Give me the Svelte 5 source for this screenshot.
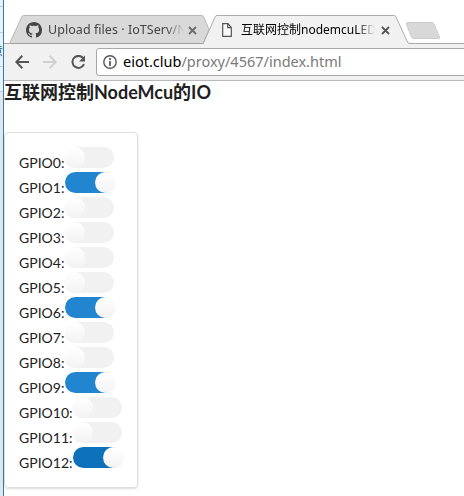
<script>
  const pins = Array.from({ length: 13 }, (_, id) => ({
    id,
    on: [1, 6, 9, 12].includes(id),
    focused: id === 12
  }));
</script>

<div class="screen">
  <div class="desktop">
    <i class="edge" style="top:6px"></i>
    <i class="edge" style="top:32px"></i>
    <span>意</span>
    <i class="edge" style="top:66px"></i>
    <i class="edge" style="top:91px"></i>
  </div>
  <div class="window">
    <header class="tabs">
      <svg class="shapes" width="460" height="44" viewBox="4 0 460 44">
        <path d="M4 43.5H464" stroke="#a9a9a9" />
        <path d="M9.5 43.5L22 16.5Q22.500 15.500 23.500 15.500H201Q203 15.500 203.500 16.500L209 29.500L203 43.500Z" fill="#d9d9d9" stroke="#b7b7b7" />
        <path d="M9.500 43.500H204" stroke="#a0a0a0" />
        <path d="M203.500 44L215 17Q215.500 15.500 217 15.500H394Q395.500 15.500 396 17L407.500 42Q408 43.500 410 43.500V45H203Z" fill="#f1f1f1" />
        <path d="M202 43.500Q203.500 43.500 204 42L215 17Q215.500 15.500 217 15.500H394Q395.500 15.500 396 17L407.500 42Q408 43.500 410 43.500" fill="none" stroke="#adadad" />
        <path d="M408 22.500H431.500Q433.500 22.500 434 24L439.500 37Q440 38.500 438 38.500H414Q412 38.500 411.500 37L406.500 24.500Q406 22.500 408 22.500Z" fill="#d8d8d8" stroke="#cbcbcb" />
      </svg>
      <div class="tab first">
        <svg width="16" height="16" viewBox="0 0 16 16"><path fill="#444" d="M8 0C3.580 0 0 3.580 0 8c0 3.540 2.290 6.530 5.470 7.590.4.070.550-.17.550-.38 0-.19-.01-.82-.01-1.490-2.010.37-2.530-.49-2.690-.94-.09-.23-.48-.94-.82-1.130-.28-.15-.68-.52-.01-.53.630-.01 1.080.58 1.230.82.720 1.210 1.870.87 2.330.66.070-.52.280-.87.510-1.070-1.780-.2-3.640-.89-3.640-3.950 0-.87.310-1.590.82-2.150-.08-.2-.36-1.020.08-2.120 0 0 .67-.21 2.200.82.640-.18 1.320-.27 2-.27s1.360.09 2 .27c1.530-1.040 2.200-.82 2.200-.82.440 1.100.16 1.920.08 2.120.51.560.82 1.270.82 2.150 0 3.070-1.870 3.750-3.650 3.950.29.250.54.730.54 1.480 0 1.070-.01 1.930-.01 2.200 0 .21.150.46.550.38A8.010 8.010 0 0 0 16 8c0-4.420-3.580-8-8-8z" /></svg>
        <span class="title">Upload files · IoTServ/N</span>
        <svg class="close" width="9" height="9" viewBox="0 0 9 9"><path d="M1 1l7 7M8 1L1 8" stroke="#6b6b6b" stroke-width="1.800" /></svg>
      </div>
      <div class="tab second">
        <svg width="10" height="14" viewBox="0 0 10 14"><path d="M.700.700H6L9.300 4.500V13.300H.700ZM5.700.700V4.700H9.300" fill="#fafafa" stroke="#555" stroke-width="1.200" /></svg>
        <span class="title">互联网控制nodemcuLED</span>
        <svg class="close" width="9" height="9" viewBox="0 0 9 9"><path d="M1 1l7 7M8 1L1 8" stroke="#555" stroke-width="1.800" /></svg>
      </div>
    </header>
    <nav class="toolbar">
      <svg class="arrow" width="14" height="14" viewBox="0 0 14 14"><path d="M14 7H1.500M7.300.800L1.300 7l6 6.200" fill="none" stroke="#555" stroke-width="2" /></svg>
      <svg class="arrow" width="14" height="14" viewBox="0 0 14 14"><path d="M0 7h12.500M6.700.800l6 6.200-6 6.200" fill="none" stroke="#d0d0d0" stroke-width="2" /></svg>
      <svg class="reload" width="15" height="15" viewBox="0 0 15 15"><path d="M12.200 3.200A6 6 0 1 0 13 9.200" fill="none" stroke="#555" stroke-width="2" /><path d="M14 .500V6.500H8Z" fill="#555" /></svg>
      <div class="url">
        <svg width="14" height="14" viewBox="0 0 14 14"><circle cx="7" cy="7" r="6.200" fill="none" stroke="#555" stroke-width="1.400" /><path d="M7 3v2M7 6v5" stroke="#555" stroke-width="1.700" /></svg>
        <span class="address">eiot.club<em>/proxy/4567/index.html</em></span>
      </div>
    </nav>
    <main>
      <h3>互联网控制NodeMcu的IO</h3>
      <section>
        {#each pins as pin (pin.id)}
          <div class="row">
            <span class="label">GPIO{pin.id}:</span>
            <span class="toggle" class:on={pin.on} class:focused={pin.focused}><i></i></span>
          </div>
        {/each}
      </section>
    </main>
  </div>
</div>

<style>
  .screen { display: flex; width: 464px; height: 496px; overflow: hidden; background: #fff; }
  .desktop { position: relative; width: 3px; flex: none; overflow: hidden; background: linear-gradient(#eaf1f9 0 91px, #e4e5e7 91px); color: #35506e; font: 12px "Noto Sans CJK SC", sans-serif; }
  .desktop span { position: absolute; right: 0; top: 42px; }
  .edge { position: absolute; left: 0; width: 3px; height: 1px; background: #bccbd9; }
  .window { box-sizing: border-box; width: 461px; flex: none; border-left: 1px solid #2d7fb8; }
  .tabs { position: relative; display: flex; height: 44px; }
  .shapes { position: absolute; left: 0; top: 0; }
  svg { flex: none; }
  .tab { position: relative; box-sizing: border-box; display: flex; align-items: center; height: 30px; margin-top: 15px; font: 12px/18px "Noto Sans", "Noto Sans CJK SC", sans-serif; }
  .first { width: 199px; padding-left: 22px; color: #444; }
  .second { width: 204px; padding-left: 19px; color: #000; }
  .title { overflow: hidden; white-space: nowrap; flex: none; }
  .first .title { width: 140px; margin-left: 6px; font-size: 12.500px; letter-spacing: .05px; -webkit-mask-image: linear-gradient(90deg, #000 118px, transparent 136px); mask-image: linear-gradient(90deg, #000 118px, transparent 136px); }
  .second .title { width: 138px; margin-left: 9px; -webkit-mask-image: linear-gradient(90deg, #000 115px, transparent 134px); mask-image: linear-gradient(90deg, #000 115px, transparent 134px); }
  .first .close { margin-left: 0; }
  .second .close { margin-left: 2px; }
  .toolbar { box-sizing: border-box; display: flex; align-items: flex-start; height: 37px; padding: 4px 0 0 11px; background: #f1f1f1; border-bottom: 1px solid #b9b9b9; }
  .arrow { margin: 7px 14px 0 0; }
  .reload { margin: 7px 10px 0 0; }
  .url { box-sizing: border-box; display: flex; align-items: center; width: 390px; flex: none; height: 28px; padding-left: 6px; background: #fff; border: 1px solid #a8a8a8; border-radius: 3px; }
  .address { margin: -1px 0 1px 6px; color: #000; font: 14.500px/24px "Noto Sans", sans-serif; white-space: nowrap; }
  em { color: #7a7a7a; font-style: normal; }
  main { color: #212121; font-family: Lato, "Noto Sans CJK SC", sans-serif; }
  h3 { height: 23px; margin: 0 0 28px; font-size: 18px; line-height: 23px; font-weight: 700; white-space: nowrap; }
  section { box-sizing: border-box; width: 134px; height: 356px; padding: 14px; border: 1px solid #dededf; border-radius: 4px; box-shadow: 0 1px 2px rgba(34, 36, 38, .15); }
  .row { display: flex; height: 25px; font-size: 14px; white-space: nowrap; }
  .label { min-width: 46px; line-height: 20px; padding-top: 6px; height: 19px; }
  .toggle { width: 49px; height: 21px; flex: none; border-radius: 11px; background: #f1f1f1; }
  .toggle i { display: block; width: 21px; height: 21px; margin-left: -1px; border-radius: 50%; background: linear-gradient(#fff, #f3f3f3); }
  .on { background: #2185d0; }
  .focused { background: #0d71bb; }
  .on i { margin-left: 30px; }
</style>
